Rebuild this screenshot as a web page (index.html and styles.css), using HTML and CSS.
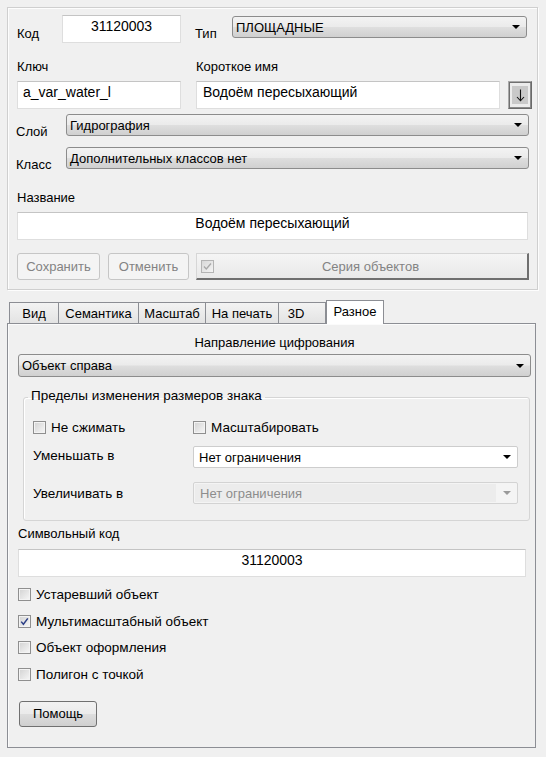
FILE: index.html
```html
<!DOCTYPE html>
<html lang="ru">
<head>
<meta charset="utf-8">
<title>Свойства объекта</title>
<link rel="stylesheet" href="styles.css">
</head>
<body>
<div class="panel">
  <div class="row r1">
    <span class="lbl lbl-kod">Код</span>
    <div class="field code">31120003</div>
    <span class="lbl lbl-tip">Тип</span>
    <div class="combo tip"><span>ПЛОЩАДНЫЕ</span><i class="arrow"></i></div>
  </div>
  <div class="row r2">
    <span class="lbl lbl-key">Ключ</span>
    <span class="lbl">Короткое имя</span>
  </div>
  <div class="row r3">
    <div class="field key">a_var_water_l</div>
    <div class="field short">Водоём пересыхающий</div>
    <div class="down-btn"><span class="down-in"><svg width="9" height="13" viewBox="0 0 9 13"><path d="M4.5 0.5V11.5M1 8L4.5 11.8L8 8" fill="none" stroke="#111" stroke-width="1.1"/></svg></span></div>
  </div>
  <div class="row r4">
    <span class="lbl lbl-side">Слой</span>
    <div class="combo wide"><span>Гидрография</span><i class="arrow"></i></div>
  </div>
  <div class="row r5">
    <span class="lbl lbl-side">Класс</span>
    <div class="combo wide"><span>Дополнительных классов нет</span><i class="arrow"></i></div>
  </div>
  <div class="lbl r6">Название</div>
  <div class="field name">Водоём пересыхающий</div>
  <div class="row r8">
    <div class="btn off save">Сохранить</div>
    <div class="btn off cancel">Отменить</div>
    <div class="series">
      <span class="series-chk"><svg width="11" height="11" viewBox="0 0 11 11"><path d="M2 5.5L4.3 8L9 2.5" fill="none" stroke="#a8a8a8" stroke-width="1.3"/></svg></span>
      <span class="series-txt">Серия объектов</span>
    </div>
  </div>
</div>

<div class="tabs">
  <div class="tab t-vid">Вид</div>
  <div class="tab t-sem">Семантика</div>
  <div class="tab t-mas">Масштаб</div>
  <div class="tab t-pech">На печать</div>
  <div class="tab t-3d">3D</div>
  <div class="tab active t-raz">Разное</div>
</div>

<div class="pane">
  <div class="dir-title">Направление цифрования</div>
  <div class="combo dir"><span>Объект справа</span><i class="arrow"></i></div>

  <fieldset class="group">
    <legend>Пределы изменения размеров знака</legend>
    <div class="grow g-chk">
      <label class="chk-row col1"><span class="chk"></span><span>Не сжимать</span></label>
      <label class="chk-row"><span class="chk"></span><span>Масштабировать</span></label>
    </div>
    <div class="grow g-min">
      <span class="glbl col1">Уменьшать в</span>
      <div class="combo white"><span>Нет ограничения</span><i class="arrow"></i></div>
    </div>
    <div class="grow g-max">
      <span class="glbl col1">Увеличивать в</span>
      <div class="combo disabled"><span class="dis-txt">Нет ограничения</span><span class="dis-btn"><i class="arrow grey"></i></span></div>
    </div>
  </fieldset>

  <div class="sym-lbl">Символьный код</div>
  <div class="field sym">31120003</div>

  <div class="checks">
    <label class="chk-row"><span class="chk"></span><span>Устаревший объект</span></label>
    <label class="chk-row"><span class="chk"><svg width="11" height="11" viewBox="0 0 11 11"><path d="M2.2 5.6L4.4 8.3L8.8 2.4" fill="none" stroke="#2c3f86" stroke-width="1.5"/></svg></span><span>Мультимасштабный объект</span></label>
    <label class="chk-row"><span class="chk"></span><span>Объект оформления</span></label>
    <label class="chk-row"><span class="chk"></span><span>Полигон с точкой</span></label>
  </div>

  <div class="btn help">Помощь</div>
</div>
</body>
</html>
```

FILE: styles.css
```css
* { box-sizing: border-box; }

html, body {
  margin: 0;
  padding: 0;
  background: #f0f0f0;
}

body {
  font-family: "Liberation Sans", Arial, sans-serif;
  font-size: 13px;
  line-height: 15px;
  color: #000;
  width: 546px;
  height: 757px;
  overflow: hidden;
}

/* ---------- top panel ---------- */
.panel {
  margin: 7px 0 0 7px;
  width: 531px;
  height: 283px;
  border: 1px solid #cfcfcf;
  box-shadow: inset 1px 1px 0 #fdfdfd, 1px 1px 0 #fdfdfd;
  padding: 0 0 0 9px;
}

.row {
  display: flex;
  align-items: flex-start;
}

.lbl { display: block; line-height: 15px; }

.r1 { margin-top: 7px; height: 28px; }
.lbl-kod { width: 45px; padding-top: 11px; }
.lbl-tip { width: 37px; margin-left: 14px; padding-top: 11px; }

.field {
  background: #fff;
  border: 1px solid #dedede;
  border-top-color: #c4c4c4;
  height: 28px;
  padding: 2px 5px 0;
  font-size: 14px;
  line-height: 16px;
  white-space: nowrap;
  overflow: hidden;
}
.code { width: 119px; text-align: center; }
.tip { width: 295px; margin-top: 1px; }

.r2 { margin-top: 16px; height: 15px; }
.lbl-key { width: 179px; }

.r3 { margin-top: 7px; height: 28px; }
.key { width: 164px; }
.short { width: 304px; margin-left: 15px; padding-left: 6px; }

.down-btn {
  margin-left: 8px;
  width: 24px;
  height: 28px;
  border: 1px solid #a9a9a9;
  border-right-color: #6a6a6a;
  border-bottom-color: #6a6a6a;
  box-shadow: inset 1px 1px 0 #707070, inset -1px -1px 0 #8a8a8a;
  background: #ececec;
  display: flex;
  align-items: center;
  justify-content: center;
}
.down-in {
  width: 16px;
  height: 18px;
  background: #c9c9c9;
  display: flex;
  align-items: center;
  justify-content: center;
}

.r4 { margin-top: 5px; height: 22px; }
.r5 { margin-top: 11px; height: 22px; }
.lbl-side { width: 50px; margin-left: -1px; padding-top: 9.5px; }

.combo {
  height: 22px;
  border: 1px solid #8c8c8c;
  border-radius: 3px;
  background: linear-gradient(#f3f3f3 0%, #ebebeb 48%, #dedede 52%, #d0d0d0 100%);
  display: flex;
  align-items: center;
  justify-content: space-between;
  padding: 0 6px 0 3px;
  white-space: nowrap;
}
.combo span { line-height: 15px; }
.wide { width: 463px; }

.arrow {
  display: block;
  width: 0;
  height: 0;
  border-left: 4px solid transparent;
  border-right: 4px solid transparent;
  border-top: 4px solid #000;
  flex: none;
}
.arrow.grey { border-top-color: #9a9a9a; }

.r6 { margin-top: 20.5px; }
.name { width: 511px; margin-top: 7.5px; text-align: center; }

.r8 { margin-top: 13px; height: 27px; }

.btn {
  height: 27px;
  border: 1px solid #707070;
  border-radius: 3px;
  background: linear-gradient(#f2f2f2 0%, #ebebeb 48%, #dddddd 52%, #cfcfcf 100%);
  display: flex;
  align-items: center;
  justify-content: center;
  white-space: nowrap;
}
.btn.off {
  border-color: #c6c6c6;
  background: #f4f4f4;
  color: #838383;
}
.save { width: 83px; }
.cancel { width: 81px; margin-left: 8px; }

.series {
  width: 333px;
  height: 27px;
  margin-left: 7px;
  border: 1px solid #d6d6d6;
  border-right: 2px solid #6f6f6f;
  border-bottom: 2px solid #6f6f6f;
  background: linear-gradient(#f5f5f5, #e9e9e9);
  display: flex;
  align-items: center;
  padding-left: 4px;
}
.series-chk {
  width: 13px;
  height: 13px;
  border: 1px solid #b4b4b4;
  background: linear-gradient(135deg, #d8d8d8, #f4f4f4);
  display: flex;
  align-items: center;
  justify-content: center;
  flex: none;
}
.series-txt {
  flex: 1;
  text-align: center;
  color: #838383;
}

/* ---------- tabs ---------- */
.tabs {
  display: flex;
  align-items: flex-end;
  margin: 10px 0 0 9px;
  height: 23px;
  position: relative;
  z-index: 1;
}
.tab {
  height: 21px;
  border: 1px solid #8c8e94;
  border-right: none;
  border-bottom: none;
  background: linear-gradient(#f3f3f3, #e3e3e3);
  display: flex;
  align-items: center;
  justify-content: center;
  white-space: nowrap;
  padding-top: 1px;
}
.t-vid { width: 49px; }
.t-sem { width: 80px; }
.t-mas { width: 67px; }
.t-pech { width: 73px; }
.t-3d { width: 48px; border-right: 1px solid #8c8e94; padding-right: 12px; }
.tab.active {
  width: 58px;
  height: 24px;
  margin-bottom: -1px;
  background: #fff;
  border: 1px solid #8c8e94;
  border-bottom: none;
  padding-bottom: 4px;
}

/* ---------- pane ---------- */
.pane {
  margin-left: 7px;
  width: 529px;
  height: 425px;
  border: 1px solid #8c8e94;
  box-shadow: inset 1px 1px 0 #fbfbfb;
  padding: 0 0 0 10px;
}

.dir-title {
  margin-top: 11px;
  text-align: center;
  padding-right: 4px;
}
.dir { width: 513px; height: 23px; margin-top: 4px; }

.group {
  margin: 11px 0 0 5px;
  width: 507px;
  border: 1px solid #d5d5d5;
  border-radius: 3px;
  box-shadow: inset 1px 1px 0 #fff;
  padding: 14px 0 16px 9px;
  min-width: 0;
}
.group legend {
  padding: 0 3px 3px 3px;
  margin-left: -5px;
  line-height: 15px;
  font-size: 13.5px;
}

.grow {
  display: flex;
  align-items: center;
}
.g-chk { height: 15px; }
.g-min { height: 22px; margin-top: 11px; }
.g-max { height: 22px; margin-top: 14px; }
.col1 { width: 160px; flex: none; }
.glbl { line-height: 15px; font-size: 13.5px; }
.g-min .glbl { margin-top: -3px; }

.combo.white {
  width: 325px;
  background: #fff;
  border-color: #cdcdcd;
  border-radius: 2px;
  padding-left: 5px;
}
.combo.disabled {
  width: 325px;
  background: #f4f4f4;
  border-color: #d3d3d3;
  border-radius: 2px;
  padding: 0;
  align-items: stretch;
}
.dis-txt {
  flex: 1;
  background: #ececec;
  color: #8d8d8d;
  padding-left: 5px;
  margin: 1px 0 1px 1px;
  display: flex;
  align-items: center;
}
.dis-btn {
  width: 21px;
  display: flex;
  align-items: center;
  justify-content: center;
}

.chk-row {
  display: flex;
  align-items: center;
  height: 15px;
  white-space: nowrap;
  font-size: 13.5px;
}
.chk {
  width: 13px;
  height: 13px;
  border: 1px solid #8f8f8f;
  background: linear-gradient(135deg, #d2d2d2, #f7f7f7);
  box-shadow: inset 0 0 0 1px #f3f3f3;
  margin-right: 5px;
  display: flex;
  align-items: center;
  justify-content: center;
  flex: none;
}
.chk svg { display: block; }

.sym-lbl { margin-top: 5px; }
.sym { width: 508px; margin-top: 8px; text-align: center; }

.checks {
  margin-top: 10px;
  display: flex;
  flex-direction: column;
  row-gap: 11.5px;
}

.help {
  width: 78px;
  height: 26px;
  margin: 19px 0 0 1px;
}
```
